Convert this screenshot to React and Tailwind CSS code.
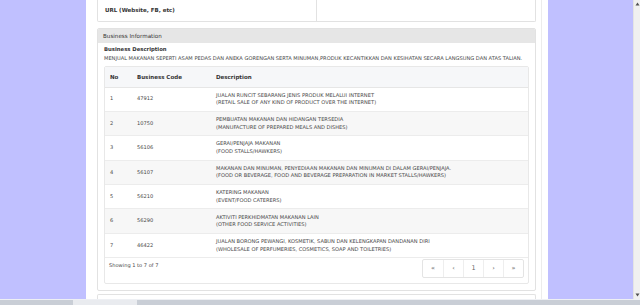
import React from 'react';

const rows = [
  ['1', '47912', 'JUALAN RUNCIT SEBARANG JENIS PRODUK MELALUI INTERNET', '(RETAIL SALE OF ANY KIND OF PRODUCT OVER THE INTERNET)'],
  ['2', '10750', 'PEMBUATAN MAKANAN DAN HIDANGAN TERSEDIA', '(MANUFACTURE OF PREPARED MEALS AND DISHES)'],
  ['3', '56106', 'GERAI/PENJAJA MAKANAN', '(FOOD STALLS/HAWKERS)'],
  ['4', '56107', 'MAKANAN DAN MINUMAN, PENYEDIAAN MAKANAN DAN MINUMAN DI DALAM GERAI/PENJAJA.', '(FOOD OR BEVERAGE, FOOD AND BEVERAGE PREPARATION IN MARKET STALLS/HAWKERS)'],
  ['5', '56210', 'KATERING MAKANAN', '(EVENT/FOOD CATERERS)'],
  ['6', '56290', 'AKTIVITI PERKHIDMATAN MAKANAN LAIN', '(OTHER FOOD SERVICE ACTIVITIES)'],
  ['7', '46422', 'JUALAN BORONG PEWANGI, KOSMETIK, SABUN DAN KELENGKAPAN DANDANAN DIRI', '(WHOLESALE OF PERFUMERIES, COSMETICS, SOAP AND TOILETRIES)'],
];

export default function App() {
  return (
    <div className="w-[640px] h-[305px] flex flex-col overflow-hidden bg-white font-['DejaVu_Sans',sans-serif] text-[5.1px] text-[#484848]">
      <div className="flex flex-1 min-h-0">
        <div className="flex flex-1 min-w-0 bg-[#c0c0ff]">
          <div className="w-[86px] shrink-0" />

          {/* main column */}
          <div className="w-[462px] shrink-0 bg-white pl-[11px] pr-[6px] flex">
            <div className="flex-1 min-w-0 flex flex-col pr-[5px] border-r border-[#ececec]">
              {/* top card */}
              <div className="h-[22px] shrink-0 border border-t-0 border-[#e2e2e2] rounded-b-[2px] flex">
                <div className="w-[219px] border-r border-[#e2e2e2] pl-[7px] pt-[6px] font-bold text-[5.5px] text-[#333]">
                  URL (Website, FB, etc)
                </div>
                <div className="flex-1" />
              </div>

              {/* Business Information panel */}
              <div className="mt-[6px] border border-[#e2e2e2] rounded-[2px] flex flex-col shrink-0 overflow-hidden">
                <div className="h-[14px] bg-[#e6e6e6] pl-[5px] flex items-center text-[5.6px] text-[#333]">
                  Business Information
                </div>
                <div className="px-[6px] pt-[2px] pb-[6px]">
                  <div className="font-bold text-[5.3px] text-[#333] leading-[8px]">Business Description</div>
                  <div className="mt-[1px] leading-[8px] whitespace-nowrap">
                    MENJUAL MAKANAN SEPERTI ASAM PEDAS DAN ANEKA GORENGAN SERTA MINUMAN,PRODUK KECANTIKKAN DAN KESIHATAN SECARA LANGSUNG DAN ATAS TALIAN.
                  </div>

                  <div className="mt-[4px] border border-[#e8e8e8] rounded-[2px]">
                    <table className="w-full border-collapse">
                      <thead>
                        <tr className="h-[20px] bg-[#f6f7f9] border-b border-[#e6e6e6] text-left text-[5.5px] text-[#333]">
                          <th className="w-[28px] pl-[5px] font-bold">No</th>
                          <th className="w-[79px] pl-[4px] font-bold">Business Code</th>
                          <th className="pl-[4px] font-bold">Description</th>
                        </tr>
                      </thead>
                      <tbody>
                        {rows.map((r, i) => (
                          <tr key={r[0]} className={`h-[24.4px] border-b border-[#ececec] ${i % 2 === 1 ? 'bg-[#f7f7f7]' : 'bg-white'}`}>
                            <td className="pl-[5px] align-middle">{r[0]}</td>
                            <td className="pl-[4px] align-middle">{r[1]}</td>
                            <td className="pl-[4px] align-middle leading-[7.5px]">
                              <div>{r[2]}</div>
                              <div>{r[3]}</div>
                            </td>
                          </tr>
                        ))}
                      </tbody>
                    </table>
                    <div className="h-[25px] flex items-start justify-between pl-[4px] pr-[4px] pt-[1px]">
                      <span className="pt-[3px]">Showing 1 to 7 of 7</span>
                      <div className="flex border border-[#e4e4e4] rounded-[2px] h-[19px] bg-white text-[#666]">
                        {['«', '‹', '1', '›', '»'].map((g, i) => (
                          <div key={i} className={`w-[20px] flex items-center justify-center text-[6.5px] ${i > 0 ? 'border-l border-[#eeeeee]' : ''}`}>
                            {g}
                          </div>
                        ))}
                      </div>
                    </div>
                  </div>
                </div>
              </div>
              <div className="flex-1 mt-[3px] border border-b-0 border-[#e2e2e2] rounded-t-[2px]" />
            </div>
          </div>

          <div className="flex-1" />
        </div>

        {/* vertical scrollbar */}
        <div className="w-[7px] bg-[#f0f0f0] border-l border-[#e4e4e4] flex flex-col items-center justify-between py-[2px]">
          <svg width="5" height="4" viewBox="0 0 5 4"><path d="M2.5 0.5 L4.5 3.5 L0.5 3.5 Z" fill="#505050" /></svg>
          <svg width="5" height="4" viewBox="0 0 5 4"><path d="M0.5 0.5 L4.5 0.5 L2.5 3.5 Z" fill="#505050" /></svg>
        </div>
      </div>

      {/* bottom bar */}
      <div className="h-[6px] bg-[#c9ced6] border-t border-[#eef0f4] flex">
        <div className="w-[73px]" />
        <div className="w-[64px] bg-[#e9ebef]" />
      </div>
    </div>
  );
}
